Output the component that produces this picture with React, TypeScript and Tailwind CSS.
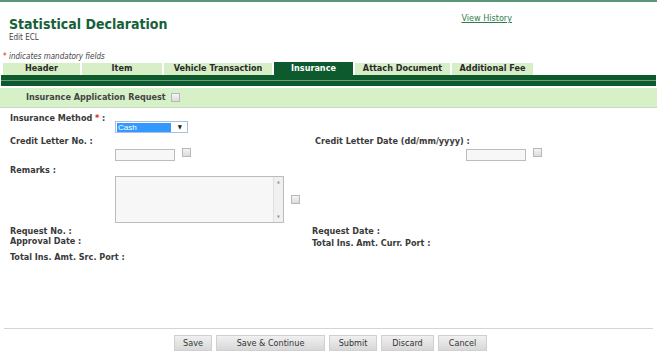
import React from 'react';

const tabs = [
  { label: 'Header', w: 'w-[77px]' },
  { label: 'Item', w: 'w-[80px]' },
  { label: 'Vehicle Transaction', w: 'w-[108px]' },
  { label: 'Insurance', w: 'w-[79px]', active: true },
  { label: 'Attach Document', w: 'w-[95px]' },
  { label: 'Additional Fee', w: 'w-[81px]' },
];

const Check = ({ className = '' }: { className?: string }) => (
  <span className={`inline-block w-[9px] h-[9px] border border-[#b8b8b8] bg-gradient-to-b from-[#f4f4f4] to-[#dcdcdc] ${className}`} />
);

const Label = ({ children, className = '' }: { children: React.ReactNode; className?: string }) => (
  <div className={`font-bold text-[#3a3a3a] leading-[12px] ${className}`}>{children}</div>
);

export default function App() {
  const buttons = [
    { label: 'Save', w: 'w-[38px]' },
    { label: 'Save & Continue', w: 'w-[109px]' },
    { label: 'Submit', w: 'w-[48px]' },
    { label: 'Discard', w: 'w-[53px]' },
    { label: 'Cancel', w: 'w-[49px]' },
  ];

  return (
    <div className="w-[657px] h-[352px] overflow-hidden bg-white border-t-2 border-[#5a977a] font-['DejaVu_Sans_Condensed','DejaVu_Sans',sans-serif] text-[9px] text-[#333]">
      {/* Title */}
      <div className="flex justify-between pl-[9px] pt-[13px] h-[49px]">
        <div>
          <h1 className="text-[14px] font-bold text-[#16613a] leading-[18px]">Statistical Declaration</h1>
          <div className="text-[8px] text-[#444] leading-[10px]">Edit ECL</div>
        </div>
        <a className="mr-[145px] -mt-[2px] text-[9px] text-[#2f7a4e] underline leading-[11px]">View History</a>
      </div>

      <div className="pl-[3px] h-[11px] leading-[11px] italic text-[8px] text-[#444]">
        <span className="text-[#e02020] not-italic">*</span> indicates mandatory fields
      </div>

      {/* Tabs */}
      <div className="flex items-end gap-[2px] pl-[3px] h-[13px]">
        {tabs.map((t) => (
          <div
            key={t.label}
            className={`${t.w} flex items-center justify-center font-bold text-[9px] ${
              t.active ? 'h-[13px] bg-[#0c5a2e] text-white' : 'h-[12px] bg-[#d6efc6] text-[#2a2a2a]'
            }`}
          >
            {t.label}
          </div>
        ))}
      </div>
      <div className="mx-[1px] h-[11px] bg-[#0d5a2d] flex flex-col justify-center">
        <div className="h-[1px] bg-[#6c9c7f]" />
      </div>

      {/* Section header */}
      <div className="mt-[2px] h-[20px] bg-[#d6f0c8] border-b border-[#c9d6c2] flex items-center pl-[26px] gap-[5px]">
        <span className="font-bold text-[9px] text-[#454545]">Insurance Application Request</span>
        <Check />
      </div>

      {/* Form */}
      <div className="pl-[10px] pt-[4px]">
        <Label className="h-[9px]">
          Insurance Method <span className="text-[#e02020]">*</span> :
        </Label>
        <div className="pl-[105px] h-[12px]">
          <div className="w-[73px] h-[12px] border border-[#a9c0e0] bg-white flex items-center pl-[1px]">
            <span className="w-[54px] h-[9px] bg-[#3399ff] text-white leading-[9px] pl-[1px] text-[8px] font-['Liberation_Sans',sans-serif]">Cash</span>
            <span className="ml-auto mr-[5px] text-[6px] leading-none text-[#222]">▼</span>
          </div>
        </div>

        <div className="flex h-[14px] items-end">
          <Label className="w-[305px]">Credit Letter No. :</Label>
          <Label>Credit Letter Date (dd/mm/yyyy) :</Label>
        </div>
        <div className="flex h-[15px] items-start pt-[1px]">
          <div className="pl-[105px] w-[456px] flex items-start gap-[7px]">
            <span className="w-[60px] h-[12px] mt-[1px] border border-[#bcbcbc] bg-[#f7f7f7]" />
            <Check />
          </div>
          <div className="flex items-start gap-[7px]">
            <span className="w-[60px] h-[12px] mt-[1px] border border-[#bcbcbc] bg-[#f7f7f7]" />
            <Check />
          </div>
        </div>

        <Label className="h-[12px] mt-[2px]">Remarks :</Label>
        <div className="pl-[105px] flex items-center gap-[7px] h-[47px]">
          <div className="w-[169px] h-[47px] border border-[#bcbcbc] bg-[#f7f7f7] flex justify-end">
            <div className="w-[10px] h-full bg-[#f0f0f0] border-l border-[#e0e0e0] flex flex-col justify-between items-center py-[3px] text-[4px] text-[#999] leading-none">
              <span>▲</span>
              <span>▼</span>
            </div>
          </div>
          <Check />
        </div>

        <div className="flex mt-[2px]">
          <div className="w-[302px]">
            <Label className="h-[10px]">Request No. :</Label>
            <Label className="h-[16px]">Approval Date :</Label>
            <Label>Total Ins. Amt. Src. Port :</Label>
          </div>
          <div>
            <Label className="h-[12px]">Request Date :</Label>
            <Label>Total Ins. Amt. Curr. Port :</Label>
          </div>
        </div>
      </div>

      {/* Footer */}
      <div className="mt-[65px] mx-[4px] border-t border-[#d4d4d4]" />
      <div className="flex justify-center gap-[4px] pt-[6px] pl-[4px]">
        {buttons.map((b) => (
          <button
            key={b.label}
            className={`${b.w} h-[16px] bg-gradient-to-b from-[#f0f0f0] to-[#d8d8d8] border border-[#d0d0d0] text-[9px] text-[#333] leading-[14px]`}
          >
            {b.label}
          </button>
        ))}
      </div>
    </div>
  );
}
